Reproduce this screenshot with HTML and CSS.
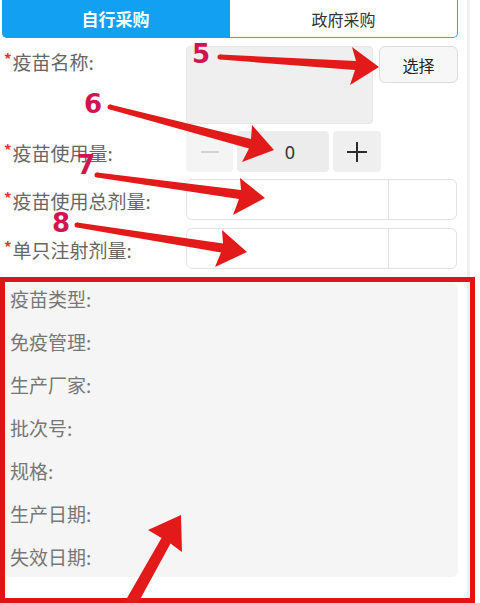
FILE: index.html
```html
<!DOCTYPE html>
<html lang="zh-CN">
<head>
    <meta charset="UTF-8">
    <meta name="viewport" content="width=device-width, initial-scale=1.0">
    <title>疫苗采购</title>
    <link rel="stylesheet" href="styles.css">
</head>
<body>
    <div class="page">
        <div class="tabs">
            <div class="tab active">自行采购</div>
            <div class="tab">政府采购</div>
        </div>

        <div class="form">
            <div class="row row-name">
                <label class="lbl"><i>*</i>疫苗名称:</label>
                <div class="name-box"></div>
                <button type="button" class="pick">选择</button>
            </div>
            <div class="row">
                <label class="lbl"><i>*</i>疫苗使用量:</label>
                <div class="stepper">
                    <span class="step minus">
                        <svg width="20" height="20" viewBox="0 0 20 20"><path d="M1 10h18" stroke="#c9c9c9" stroke-width="1.5"/></svg>
                    </span>
                    <span class="step value">0</span>
                    <span class="step plus">
                        <svg width="22" height="22" viewBox="0 0 22 22"><path d="M1 11h20M11 1v20" stroke="#2b2b2b" stroke-width="2"/></svg>
                    </span>
                </div>
            </div>
            <div class="row">
                <label class="lbl"><i>*</i>疫苗使用总剂量:</label>
                <div class="unit-input"><span class="main"></span><span class="unit"></span></div>
            </div>
            <div class="row">
                <label class="lbl"><i>*</i>单只注射剂量:</label>
                <div class="unit-input"><span class="main"></span><span class="unit"></span></div>
            </div>
        </div>

        <div class="info">
            <div class="info-row">疫苗类型:</div>
            <div class="info-row">免疫管理:</div>
            <div class="info-row">生产厂家:</div>
            <div class="info-row">批次号:</div>
            <div class="info-row">规格:</div>
            <div class="info-row">生产日期:</div>
            <div class="info-row">失效日期:</div>
        </div>
    </div>

    <!-- annotation layer -->
    <svg class="marks" width="480" height="603" viewBox="0 0 480 603">
        <rect x="2.5" y="279.5" width="470" height="321" fill="none" stroke="#e01414" stroke-width="5"/>
        <g fill="#e21a1a">
            <polygon points="220,54.5 356,61 352,47 379,67 350,85 355,70 220,59.5"/>
            <circle cx="220" cy="57" r="2.5"/>
            <polygon points="110,104.5 251,139 252,125 274,150 242,162 249,148.5 110,109.5"/>
            <circle cx="110" cy="107" r="2.5"/>
            <polygon points="97,172.5 241,190 240,178 265,198 233,215 239,199 97,177.5"/>
            <circle cx="97" cy="175" r="2.5"/>
            <polygon points="77,222.5 223,243.5 222,230 247,252 215,267 221,252.5 77,227.5"/>
            <circle cx="77" cy="225" r="2.5"/>
            <polygon points="123,605 161.5,538 148,530 181,515 182,552 170.5,543.5 137,605"/>
        </g>
        <g class="num">
            <text x="192" y="63">5</text>
            <text x="84" y="113">6</text>
            <text x="77" y="174">7</text>
            <text x="52" y="232">8</text>
        </g>
    </svg>
</body>
</html>
```

FILE: styles.css
```css
body {
    margin: 0;
    font-family: "Noto Sans", "Noto Sans CJK SC", sans-serif;
    background-color: #fff;
}
.page {
    width: 463px;
    min-height: 603px;
    padding-left: 4px;
    border-right: 3px solid #f0f0f0;
}
.tabs {
    display: flex;
    width: 456px;
    height: 38px;
    margin-left: -2px;
}
.tab {
    flex: 1;
    display: flex;
    align-items: center;
    justify-content: center;
    font-family: "Noto Sans CJK SC", sans-serif;
    font-size: 16px;
    color: #333;
    border: 1px solid #3ba6de;
    border-top: none;
    border-left: none;
    border-radius: 0 0 5px 0;
    background-color: #fff;
}
.tab.active {
    color: #fff;
    font-weight: bold;
    font-size: 17px;
    background-color: #12a0f3;
    border-color: #12a0f3;
    border-radius: 0 0 0 5px;
}
.form {
    padding-top: 8px;
}
.row {
    display: flex;
    align-items: center;
    margin-bottom: 7px;
}
.row:nth-child(3) {
    margin-bottom: 8px;
}
.row-name {
    align-items: flex-start;
}
.lbl {
    width: 182px;
    flex-shrink: 0;
    font-family: "Noto Sans CJK SC", sans-serif;
    font-size: 19px;
    line-height: 24px;
    color: #666;
}
.row-name .lbl {
    padding-top: 1px;
}
.lbl i {
    font-style: normal;
    font-size: 15px;
    font-weight: bold;
    color: #e0322f;
    vertical-align: 5px;
    margin-right: 1px;
}
.name-box {
    width: 185px;
    height: 76px;
    background-color: #efefef;
    border: 1px solid #e6e6e6;
    border-radius: 4px;
}
.pick {
    width: 79px;
    height: 37px;
    margin-left: 6px;
    padding: 0;
    font-family: "Noto Sans CJK SC", sans-serif;
    font-size: 16px;
    color: #222;
    background-color: #f7f7f7;
    border: 1px solid #dcdcdc;
    border-radius: 6px;
}
.stepper {
    display: flex;
    gap: 4px;
    height: 41px;
}
.step {
    display: flex;
    align-items: center;
    justify-content: center;
    border-radius: 4px;
}
.minus {
    width: 47px;
    background-color: #f4f4f4;
}
.value {
    width: 78px;
    padding-left: 14px;
    background-color: #ececec;
    font-size: 18px;
    color: #333;
}
.plus {
    width: 48px;
    background-color: #efefef;
}
.unit-input {
    display: flex;
    width: 269px;
    height: 39px;
    border: 1px solid #e3e3e3;
    border-radius: 6px;
}
.unit-input .main {
    width: 201px;
    border-right: 1px solid #e3e3e3;
}
.info {
    width: 448px;
    margin-top: 14px;
    padding: 4px 0 8px 6px;
    background-color: #f5f5f5;
    border-radius: 6px;
}
.info-row {
    font-family: "Noto Sans CJK SC", sans-serif;
    font-size: 19px;
    line-height: 24px;
    color: #777;
    margin-bottom: 19px;
}
.info-row:last-child {
    margin-bottom: 0;
}
.marks {
    position: absolute;
    top: 0;
    left: 0;
    pointer-events: none;
}
.num text {
    font-family: "DejaVu Sans", sans-serif;
    font-weight: bold;
    font-size: 26px;
    fill: #d3134f;
}
```
